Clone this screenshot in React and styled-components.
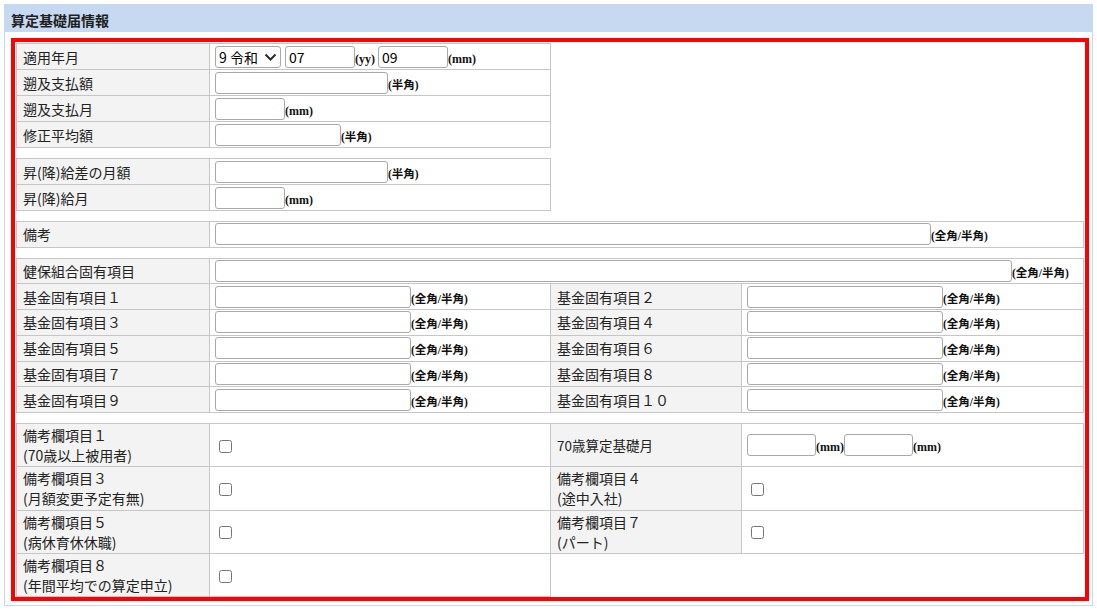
import React from "react";
import styled, { createGlobalStyle } from "styled-components";

const GlobalStyle = createGlobalStyle`
  html, body { margin: 0; background: #fff; }
  body {
    font-family: "Noto Sans CJK JP", "Noto Sans", sans-serif;
    color: #222;
  }
`;

const Panel = styled.section`
  margin: 4px;
  border: 1px solid #c6d9f1;
`;

const PanelTitle = styled.h2`
  margin: 0;
  height: 27px;
  padding: 0 6px;
  background: #c6d9f1;
  font-size: 14px;
  font-weight: bold;
  line-height: 31px;
  color: #1e1e1e;
`;

const Frame = styled.div`
  margin: 6px 3px 4px 6px;
  border: 4px solid #ff0000;
  padding: 1px 1px 0;
`;

const Grid = styled.table`
  border-collapse: collapse;
  table-layout: fixed;
  width: ${(p) => (p.$half ? "535px" : "100%")};
  margin: 0 0 ${(p) => (p.$last ? "0" : "10px")};
`;

const Row = styled.tr`
  height: ${(p) => p.$h || 26}px;
`;

const Label = styled.th`
  padding: 0 6px;
  border: 1px solid #c6c6c6;
  background: #f3f3f3;
  text-align: left;
  vertical-align: middle;
  font-weight: normal;
  font-size: ${(p) => (p.$small ? "13.5px" : "14px")};
  line-height: 20px;
  color: #222;
  white-space: nowrap;
`;

const Value = styled.td`
  padding: 0 5px;
  border: 1px solid #c6c6c6;
  vertical-align: middle;
  white-space: nowrap;
  font-size: 14px;
`;

const Field = styled.input`
  box-sizing: border-box;
  width: ${(p) => p.$w}px;
  height: 22px;
  margin: 0 0 0 ${(p) => p.$gap || 0}px;
  padding: 0 3px;
  border: 1px solid #a9a9a9;
  border-radius: 3px;
  background: #fff;
  font: 14px "Noto Sans CJK JP", sans-serif;
  color: #000;
  vertical-align: baseline;
  outline: none;
`;

const Note = styled.span`
  font-family: "Liberation Serif", "Noto Sans CJK JP", serif;
  font-weight: bold;
  font-size: ${(p) => (p.$unit ? "12px" : "11.5px")};
  color: #111;
`;

const Check = styled.input.attrs({ type: "checkbox" })`
  width: 13px;
  height: 13px;
  margin: 3px 3px 3px 4px;
  vertical-align: middle;
`;

const SelectBox = styled.span`
  position: relative;
  display: inline-block;
  vertical-align: baseline;
`;

const Select = styled.select`
  appearance: none;
  box-sizing: border-box;
  width: 66px;
  height: 22px;
  margin: 0;
  padding: 0 18px 0 3px;
  border: 1px solid #a9a9a9;
  border-radius: 3px;
  background: #fff;
  font: 14px "Noto Sans CJK JP", sans-serif;
  color: #000;
  outline: none;
`;

const Chevron = styled.svg`
  position: absolute;
  right: 4px;
  top: 5px;
  width: 13px;
  height: 12px;
  pointer-events: none;
`;

const Cols = ({ half, pair }) => (
  <colgroup>
    <col style={{ width: 193 }} />
    {half ? <col /> : pair ? <col /> : <>
      <col style={{ width: 341 }} />
      <col style={{ width: 191 }} />
      <col />
    </>}
  </colgroup>
);

const TwoLine = ({ title, sub }) => (
  <>
    {title}
    <br />
    {sub}
  </>
);

const fundItems = [
  ["基金固有項目１", "基金固有項目２"],
  ["基金固有項目３", "基金固有項目４"],
  ["基金固有項目５", "基金固有項目６"],
  ["基金固有項目７", "基金固有項目８"],
  ["基金固有項目９", "基金固有項目１０"],
];

export default function App() {
  return (
    <>
      <GlobalStyle />
      <Panel>
        <PanelTitle>算定基礎届情報</PanelTitle>
        <Frame>
          <Grid $half>
            <Cols half />
            <tbody>
              <Row>
                <Label>適用年月</Label>
                <Value>
                  <SelectBox>
                    <Select defaultValue="9">
                      <option value="5">5 昭和</option>
                      <option value="7">7 平成</option>
                      <option value="9">9 令和</option>
                    </Select>
                    <Chevron viewBox="0 0 13 12">
                      <path d="M1.5 3.5 L6.5 8.5 L11.5 3.5" fill="none" stroke="#2b2b2b" strokeWidth="2" />
                    </Chevron>
                  </SelectBox>
                  <Field $w={70} $gap={4} defaultValue="07" />
                  <Note $unit>(yy)</Note>
                  <Field $w={70} $gap={3} defaultValue="09" />
                  <Note $unit>(mm)</Note>
                </Value>
              </Row>
              <Row>
                <Label>遡及支払額</Label>
                <Value>
                  <Field $w={173} />
                  <Note>(半角)</Note>
                </Value>
              </Row>
              <Row>
                <Label>遡及支払月</Label>
                <Value>
                  <Field $w={70} />
                  <Note $unit>(mm)</Note>
                </Value>
              </Row>
              <Row>
                <Label>修正平均額</Label>
                <Value>
                  <Field $w={126} />
                  <Note>(半角)</Note>
                </Value>
              </Row>
            </tbody>
          </Grid>

          <Grid $half>
            <Cols half />
            <tbody>
              <Row>
                <Label>昇(降)給差の月額</Label>
                <Value>
                  <Field $w={173} />
                  <Note>(半角)</Note>
                </Value>
              </Row>
              <Row>
                <Label>昇(降)給月</Label>
                <Value>
                  <Field $w={70} />
                  <Note $unit>(mm)</Note>
                </Value>
              </Row>
            </tbody>
          </Grid>

          <Grid>
            <Cols pair />
            <tbody>
              <Row $h={25.5}>
                <Label>備考</Label>
                <Value>
                  <Field $w={716} />
                  <Note>(全角/半角)</Note>
                </Value>
              </Row>
            </tbody>
          </Grid>

          <Grid>
            <Cols />
            <tbody>
              <Row $h={25.75}>
                <Label>健保組合固有項目</Label>
                <Value colSpan={3}>
                  <Field $w={797} />
                  <Note>(全角/半角)</Note>
                </Value>
              </Row>
              {fundItems.map(([a, b]) => (
                <Row key={a} $h={25.75}>
                  <Label>{a}</Label>
                  <Value>
                    <Field $w={196} />
                    <Note>(全角/半角)</Note>
                  </Value>
                  <Label>{b}</Label>
                  <Value>
                    <Field $w={196} />
                    <Note>(全角/半角)</Note>
                  </Value>
                </Row>
              ))}
            </tbody>
          </Grid>

          <Grid $last>
            <Cols />
            <tbody>
              <Row $h={43.25}>
                <Label>
                  <TwoLine title="備考欄項目１" sub="(70歳以上被用者)" />
                </Label>
                <Value>
                  <Check />
                </Value>
                <Label $small>70歳算定基礎月</Label>
                <Value>
                  <Field $w={69} />
                  <Note $unit>(mm)</Note>
                  <Field $w={69} />
                  <Note $unit>(mm)</Note>
                </Value>
              </Row>
              <Row $h={43.25}>
                <Label>
                  <TwoLine title="備考欄項目３" sub="(月額変更予定有無)" />
                </Label>
                <Value>
                  <Check />
                </Value>
                <Label>
                  <TwoLine title="備考欄項目４" sub="(途中入社)" />
                </Label>
                <Value>
                  <Check />
                </Value>
              </Row>
              <Row $h={43.25}>
                <Label>
                  <TwoLine title="備考欄項目５" sub="(病休育休休職)" />
                </Label>
                <Value>
                  <Check />
                </Value>
                <Label>
                  <TwoLine title="備考欄項目７" sub="(パート)" />
                </Label>
                <Value>
                  <Check />
                </Value>
              </Row>
              <Row $h={43.25}>
                <Label>
                  <TwoLine title="備考欄項目８" sub="(年間平均での算定申立)" />
                </Label>
                <Value>
                  <Check />
                </Value>
              </Row>
            </tbody>
          </Grid>
        </Frame>
      </Panel>
    </>
  );
}
